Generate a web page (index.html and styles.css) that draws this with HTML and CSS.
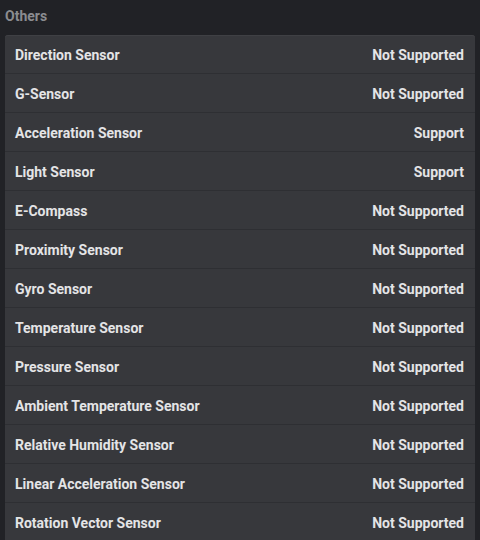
FILE: index.html
```html
<!DOCTYPE html>
<html>
<head>
<meta charset="utf-8">
<link rel="stylesheet" href="styles.css">
</head>
<body>
<div class="page">
  <div class="header">Others</div>
  <div class="card">
    <div class="row"><span class="label">Direction Sensor</span><span class="value">Not Supported</span></div>
    <div class="row"><span class="label">G-Sensor</span><span class="value">Not Supported</span></div>
    <div class="row"><span class="label">Acceleration Sensor</span><span class="value">Support</span></div>
    <div class="row"><span class="label">Light Sensor</span><span class="value">Support</span></div>
    <div class="row"><span class="label">E-Compass</span><span class="value">Not Supported</span></div>
    <div class="row"><span class="label">Proximity Sensor</span><span class="value">Not Supported</span></div>
    <div class="row"><span class="label">Gyro Sensor</span><span class="value">Not Supported</span></div>
    <div class="row"><span class="label">Temperature Sensor</span><span class="value">Not Supported</span></div>
    <div class="row"><span class="label">Pressure Sensor</span><span class="value">Not Supported</span></div>
    <div class="row"><span class="label">Ambient Temperature Sensor</span><span class="value">Not Supported</span></div>
    <div class="row"><span class="label">Relative Humidity Sensor</span><span class="value">Not Supported</span></div>
    <div class="row"><span class="label">Linear Acceleration Sensor</span><span class="value">Not Supported</span></div>
    <div class="row"><span class="label">Rotation Vector Sensor</span><span class="value">Not Supported</span></div>
  </div>
</div>
</body>
</html>
```

FILE: styles.css
```css
html, body {
  margin: 0;
  padding: 0;
  background: #212226;
  height: 100%;
  overflow: hidden;
}
.page {
  padding: 0 5px 0 5px;
  font-family: Roboto, "Liberation Sans", sans-serif;
}
.header {
  height: 35px;
  box-sizing: border-box;
  padding-top: 6px;
  font-size: 14px;
  font-weight: 700;
  color: #8b8c90;
  line-height: 20px;
}
.card {
  background: #37383c;
  border-radius: 3px 3px 0 0;
  box-shadow: inset 0 1px 0 #3f4044;
}
.row {
  display: flex;
  justify-content: space-between;
  align-items: center;
  height: 36px;
  padding: 2px 11px 0 10px;
  border-bottom: 1px solid #2e2f33;
  font-size: 14px;
  font-weight: 700;
  color: #e4e4e6;
}
```
